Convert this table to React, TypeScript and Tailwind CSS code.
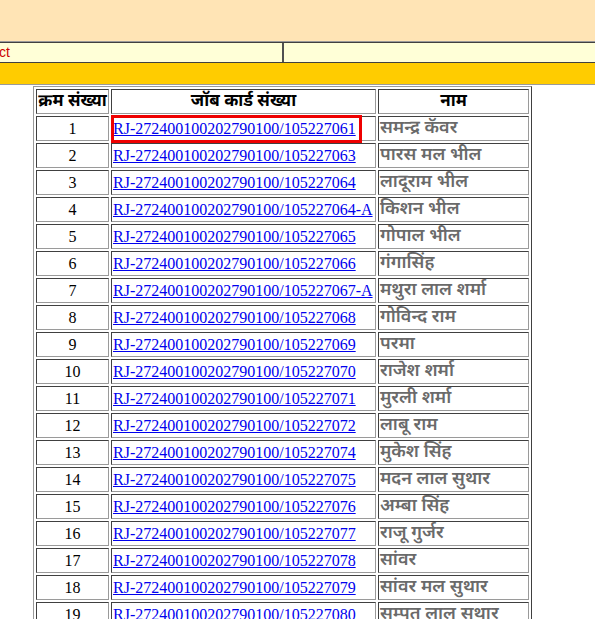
import React from "react";

const rows: [string, string, string][] = [
  ["1", "105227061", "समन्द्र कॅवर"],
  ["2", "105227063", "पारस मल भील"],
  ["3", "105227064", "लादूराम भील"],
  ["4", "105227064-A", "किशन भील"],
  ["5", "105227065", "गोपाल भील"],
  ["6", "105227066", "गंगासिंह"],
  ["7", "105227067-A", "मथुरा लाल शर्मा"],
  ["8", "105227068", "गोविन्द राम"],
  ["9", "105227069", "परमा"],
  ["10", "105227070", "राजेश शर्मा"],
  ["11", "105227071", "मुरली शर्मा"],
  ["12", "105227072", "लाबू राम"],
  ["13", "105227074", "मुकेश सिंह"],
  ["14", "105227075", "मदन लाल सुथार"],
  ["15", "105227076", "अम्बा सिंह"],
  ["16", "105227077", "राजू गुर्जर"],
  ["17", "105227078", "सांवर"],
  ["18", "105227079", "सांवर मल सुथार"],
  ["19", "105227080", "सम्पत लाल सुथार"],
];

const cell =
  "border border-t-[#404040] border-l-[#404040] border-r-[#9a9a9a] border-b-[#9a9a9a] p-0 h-[25px]";

export default function App() {
  return (
    <div className="w-[595px] h-[619px] overflow-hidden bg-white">
      <div className="h-[42px] bg-[#FFE4B5] border-b border-b-[#9a9a9a]" />
      <div className="flex h-[21px] bg-[#FFFFD7] border-t border-t-[#404040] border-b border-b-[#404040]">
        <div className="w-[285px] border-r-2 border-r-[#505050] text-[#cc0000] text-[14px] leading-[19px] font-['Liberation_Sans',sans-serif] -ml-[1px]">
          ct
        </div>
        <div className="flex-1" />
      </div>
      <div className="h-[22px] bg-[#FFCC00] border-b border-b-[#9a9a9a]" />
      <table className="ml-[33px] mt-[1px] border-separate border-spacing-[2px] border border-t-[#9a9a9a] border-l-[#9a9a9a] border-r-[#404040] border-b-[#404040]">
        <thead>
          <tr>
            <th className={`${cell} w-[73px] text-[17px] font-bold text-black font-['Noto_Sans_Devanagari','Lohit_Devanagari',sans-serif] leading-[22px] whitespace-nowrap`}>
              क्रम संख्या
            </th>
            <th className={`${cell} w-[265px] text-[17px] font-bold text-black font-['Noto_Sans_Devanagari','Lohit_Devanagari',sans-serif] leading-[22px]`}>
              जॉब कार्ड संख्या
            </th>
            <th className={`${cell} w-[151px] text-[17px] font-bold text-black font-['Noto_Sans_Devanagari','Lohit_Devanagari',sans-serif] leading-[22px]`}>
              नाम
            </th>
          </tr>
        </thead>
        <tbody>
          {rows.map(([n, code, name], i) => (
            <tr key={n}>
              <td className={`${cell} text-center text-[16px] text-black font-['Liberation_Serif',serif] leading-[22px]`}>
                {n}
              </td>
              <td className={`${cell} relative text-left text-[16px] font-['Liberation_Serif',serif] leading-[22px] whitespace-nowrap`}>
                <a href="#" className="text-[#0000EE] underline pl-[1px]">
                  {`RJ-272400100202790100/${code}`}
                </a>
                {i === 0 && (
                  <span className="absolute left-[-1px] top-[-2px] w-[251px] h-[28px] border-[3px] border-[#ee0000] pointer-events-none" />
                )}
              </td>
              <td className={`${cell} text-left text-[18px] font-semibold text-[#6a6a6a] font-['Noto_Sans_Devanagari','Lohit_Devanagari',sans-serif] leading-[22px] whitespace-nowrap pl-[1px]`}>
                {name}
              </td>
            </tr>
          ))}
        </tbody>
      </table>
    </div>
  );
}
